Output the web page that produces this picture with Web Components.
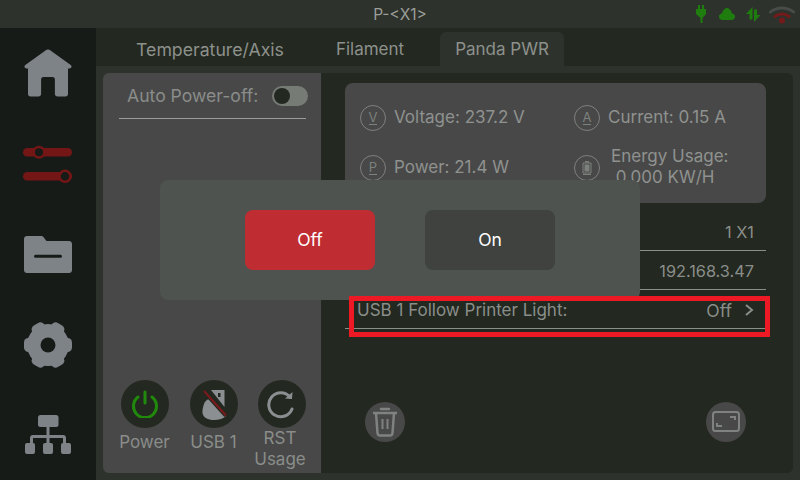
<!DOCTYPE html>
<html>
<head>
<meta charset="utf-8">
<title>Panda PWR</title>
<style>
html, body { margin: 0; padding: 0; width: 800px; height: 480px; overflow: hidden; background: #2d332c; }
body { font-family: "Inter", "Noto Sans", sans-serif; }
</style>
</head>
<body>
<panda-app></panda-app>
<script>
// small helper so every element below stays a few lines long
function define(name, css, html) {
    customElements.define(name, class extends HTMLElement {
        constructor() {
            super();
            this.attachShadow({ mode: 'open' });
        }
        connectedCallback() {
            const attrs = {};
            for (const a of this.attributes) attrs[a.name] = a.value;
            this.shadowRoot.innerHTML = `<style>${css}</style>${typeof html === 'function' ? html(attrs) : html}`;
        }
    });
}

// ── Top bar ───────────────────────────────────────────────────────────────────
define('top-bar', `
    :host { display: flex; height: 28px; position: relative; align-items: center; justify-content: center;
        background: #2d322c; color: #9b9e99; font-size: 15.5px; }
    .status { position: absolute; right: 5px; top: 3px; display: flex; }
    svg { display: block; }
`, `
    <span>P-&lt;X1&gt;</span>
    <div class="status">
        <svg width="108" height="24" viewBox="0 0 108 24">
            <path d="M11 2h2v4h2V2h2v4h2v5l-3.500 4v5h-2v-5L9 11V6h2z" fill="#1f7c0f"/>
            <path d="M35.500 17c-2.200 0-3.500-1.500-3.500-3.200 0-1.700 1.200-3 3-3.200.6-3 2.800-5.600 5-5.600s4.400 2.600 5 5.600c1.800.2 3 1.500 3 3.200 0 1.700-1.300 3.200-3.500 3.200z" fill="#1f7c0f"/>
            <path d="M65.500 4v12.500h-3V11H59zM67 19V6.500h3V12h3.500z" fill="#1f7c0f"/>
            <path d="M83.500 9c6-5.500 17-5.500 23 0" fill="none" stroke="#484b47" stroke-width="3" stroke-linecap="round"/>
            <path d="M88 13.500c4-3.500 10-3.500 14 0" fill="none" stroke="#741a1a" stroke-width="3" stroke-linecap="round"/>
            <circle cx="95" cy="17.500" r="3" fill="#741a1a"/>
        </svg>
    </div>
`);

// ── Side navigation ───────────────────────────────────────────────────────────
define('side-nav', `
    :host { display: flex; flex-direction: column; width: 96px; box-sizing: border-box; height: 452px;
        background: #171b18; align-items: center; }
    .slot { width: 96px; display: flex; align-items: center; justify-content: center; }
    svg { display: block; overflow: visible; }
`, `
    <div class="slot" style="height:92px">
        <svg width="50" height="50" viewBox="0 0 50 50"><path fill="#7e8388" d="M25 .5c1 0 1.700.4 2.500 1L47.700 16c1.500 1.200 1 3.300-1.200 3.500h-1.500V45c0 1.600-1 2.500-2.500 2.500h-8c-1.500 0-2.600-1-2.600-2.500V30.500c0-1.500-.9-2.500-2.400-2.500h-9c-1.500 0-2.400 1-2.400 2.500V45c0 1.500-1.100 2.500-2.600 2.500H7.500C6 47.500 5 46.600 5 45V19.500H3.500c-2.200-.2-2.700-2.300-1.200-3.500L22.500 1.500c.8-.6 1.500-1 2.500-1z"/></svg>
    </div>
    <div class="slot" style="height:92px">
        <svg width="50" height="36" viewBox="0 0 50 36">
            <rect x="0" y="0" width="49" height="8.500" rx="4.250" fill="#751616"/>
            <rect x="0" y="24" width="49" height="8.500" rx="4.250" fill="#751616"/>
            <circle cx="16" cy="4.200" r="5.300" fill="#171b18" stroke="#751616" stroke-width="2.500"/>
            <circle cx="42" cy="28.200" r="5.500" fill="#171b18" stroke="#751616" stroke-width="2.500"/>
        </svg>
    </div>
    <div class="slot" style="height:85px">
        <svg width="50" height="37" viewBox="0 0 50 37"><path fill="#7e8388" fill-rule="evenodd" d="M1 3C1 1.200 2.300 0 4 0h14c1.500 0 2.300.7 3 1.700L23.500 5H46c1.700 0 3 1.300 3 3v26c0 1.700-1.300 3-3 3H4c-1.700 0-3-1.300-3-3z M12.500 18.800a1.500 1.500 0 0 0 0 3h25a1.500 1.500 0 0 0 0-3z"/></svg>
    </div>
    <div class="slot" style="height:95px">
        <svg width="48" height="48" viewBox="-24 -24 48 48">
            <mask id="hole"><rect x="-30" y="-30" width="60" height="60" fill="#fff"/><circle r="7.500" fill="#000"/></mask>
            <g fill="#7e8388" mask="url(#hole)">
                <circle r="21"/>
                <rect x="-24" y="-7" width="48" height="14" rx="4.500"/>
                <rect x="-24" y="-7" width="48" height="14" rx="4.500" transform="rotate(60)"/>
                <rect x="-24" y="-7" width="48" height="14" rx="4.500" transform="rotate(120)"/>
            </g>
        </svg>
    </div>
    <div class="slot" style="height:84px">
        <svg width="48" height="39" viewBox="0 0 48 39"><g fill="#7e8388">
            <rect x="14" y="0" width="20.500" height="12" rx="2.500"/>
            <rect x="22.500" y="11" width="3" height="18"/>
            <path d="M6 29v-6c0-2 1-3 3-3h30c2 0 3 1 3 3v6h-3v-6H9v6z"/>
            <rect x="1" y="28" width="10" height="11" rx="2"/>
            <rect x="19" y="28" width="10" height="11" rx="2"/>
            <rect x="37" y="28" width="10" height="11" rx="2"/>
        </g></svg>
    </div>
`);

// ── Tabs ──────────────────────────────────────────────────────────────────────
define('tab-bar', `
    :host { display: flex; height: 38px; box-sizing: border-box; padding: 4px 0 0 24px; background: #232820;
        color: #8d918c; font-size: 17px; }
    span { display: flex; align-items: center; justify-content: center; height: 34px; box-sizing: border-box; border-radius: 6px 6px 0 0; }
    .a { width: 180px; font-size: 17.7px; }
    .b { width: 140px; }
    .c { width: 124px; background: #2d332c; }
`, `
    <span class="a">Temperature/Axis</span>
    <span class="b">Filament</span>
    <span class="c">Panda PWR</span>
`);

// ── Round button with a label (left panel) ────────────────────────────────────
define('round-action', `
    :host { display: flex; flex: none; flex-direction: column; align-items: center; width: 68px; color: #8a8d8a; font-size: 17px; line-height: 21px; text-align: center; }
    .disc { width: 48px; height: 48px; border-radius: 50%; background: #232820; display: flex; align-items: center; justify-content: center; flex: none; }
    svg { display: block; }
`, a => `
    <div class="disc"><slot></slot></div>
    <div style="margin-top:${a.gap}px;padding-right:${a.nudge || 0}px">${a.label}</div>
`);

// ── Left panel ────────────────────────────────────────────────────────────────
define('power-panel', `
    :host { display: flex; flex-direction: column; width: 218px; height: 400px; box-sizing: border-box; background: #484848;
        border-radius: 6px 0 0 6px; color: #8a8d8a; padding: 0 15px 0 16px; }
    .auto { display: flex; align-items: center; height: 45px; border-bottom: 1px solid #9a9c9a; font-size: 17.6px; padding-left: 8px; gap: 14px; white-space: nowrap; }
    .toggle { width: 36px; height: 20px; border-radius: 10px; background: #767b76; position: relative; flex: none; }
    .toggle i { position: absolute; left: 2px; top: 2px; width: 16px; height: 16px; border-radius: 50%; background: #232820; }
    .actions { margin-top: auto; display: flex; margin-left: -8px; height: 93px; gap: 0.500px; }
`, `
    <div class="auto"><span>Auto Power-off:</span><div class="toggle"><i></i></div></div>
    <div class="actions">
        <round-action label="Power" gap="4" nudge="1">
            <svg width="28" height="28" viewBox="0 0 28 28" fill="none" stroke="#218a0d" stroke-width="3" stroke-linecap="round"><path d="M14 2v11"/><path d="M7 7a11.500 11.500 0 1 0 14 0" /></svg>
        </round-action>
        <round-action label="USB 1" gap="4">
            <svg width="48" height="48" viewBox="0 0 48 48">
                <path fill="#8b8f92" d="M21 10h13.500v17z"/>
                <rect x="28" y="13" width="2.500" height="4" fill="#232820"/>
                <path fill="#8b8f92" d="M19 19l17 17c-2.500 2.500-7 4-12 4-6 0-11-2.500-11.500-7-.3-3 .5-6 1.500-9 .8-2.500 2.500-4 5-5z"/>
                <path d="M13 10l23 25.500" stroke="#232820" stroke-width="4.500"/>
                <path d="M14 11l22 24.500" stroke="#7a1b1b" stroke-width="2.200"/>
            </svg>
        </round-action>
        <round-action label="RST<br>Usage" gap="0" nudge="4">
            <svg width="30" height="30" viewBox="0 0 30 30" fill="none" stroke="#8b8f92" stroke-width="3" stroke-linecap="round"><path d="M25 20a12 12 0 1 1-2-12"/><path d="M25.500 3l-.5 7-7-.5" fill="#8b8f92" stroke-width="0"/></svg>
        </round-action>
    </div>
`);

// ── Metric with a round letter icon ───────────────────────────────────────────
define('metric-item', `
    :host { display: flex; align-items: center; gap: 8px; color: #8f928f; font-size: 17px; line-height: 21px; white-space: pre; }
    .ico { width: 26px; height: 26px; flex: none; box-sizing: border-box; border: 1.500px solid #7d817d; border-radius: 50%;
        display: flex; flex-direction: column; align-items: center; justify-content: center; font-size: 13px; line-height: 13px; color: #7d817d; }
    .ico::after { content: ""; width: 8px; height: 1px; background: #7d817d; }
    .txt { padding-bottom: 2px; }
`, a => `
    <div class="ico"><slot></slot></div>
    <div class="txt" style="margin-left:${a.shift || 0}px">${a.text}</div>
`);

// ── Setting row ───────────────────────────────────────────────────────────────
define('setting-row', `
    :host { display: flex; align-items: center; height: 39px; box-sizing: border-box; padding: 2px 12px 0 12px; border-bottom: 1px solid #8a8f87;
        color: #8a8e8a; font-size: 17px; justify-content: space-between; }
    .v { display: flex; align-items: center; gap: 13px; font-size: 16.3px; }
`, `
    <span><slot name="k"></slot></span><span class="v"><slot></slot></span>
`);

// ── Right panel ───────────────────────────────────────────────────────────────
define('detail-panel', `
    :host { display: block; width: 472px; height: 400px; box-sizing: border-box; background: #232820; border-radius: 0 6px 6px 0;
        padding: 10px 27px 0 24px; }
    .card { height: 120px; box-sizing: border-box; background: #484848; border-radius: 8px; display: grid;
        grid-template-columns: 214px 1fr; grid-template-rows: 50px 50px; align-content: center; padding: 0 0 0 15px; margin-bottom: 9px; }
    .foot { display: flex; justify-content: space-between; padding: 73px 20px 0 20px; }
    .btn { width: 40px; height: 40px; border-radius: 50%; background: #484848; display: flex; align-items: center; justify-content: center; }
    svg { display: block; }
    .chev { width: 9px; height: 12px; }
    .off { font-size: 17.5px; }
`, `
    <div class="card">
        <metric-item text="Voltage: 237.2 V">V</metric-item>
        <metric-item text="Current: 0.15 A">A</metric-item>
        <metric-item text="Power: 21.4 W">P</metric-item>
        <metric-item shift="3" text="Energy Usage:&#10; 0.000 KW/H">
            <svg width="10" height="13" viewBox="0 0 10 13"><path fill="none" stroke="#7d817d" stroke-width="1" d="M1 2h8v10H1z"/><rect x="2.500" y="3.500" width="5" height="7" fill="#7d817d"/><rect x="3" y="0" width="4" height="1.500" fill="#7d817d"/></svg>
        </metric-item>
    </div>
    <setting-row><span slot="k"></span>1 X1</setting-row>
    <setting-row><span slot="k"></span>192.168.3.47</setting-row>
    <setting-row><span slot="k">USB 1 Follow Printer Light:</span><span class="off">Off</span><svg class="chev" viewBox="0 0 9 12" fill="none" stroke="#8a8e8a" stroke-width="2"><path d="M1 1l6 5-6 5"/></svg></setting-row>
    <div class="foot">
        <div class="btn"><svg width="26" height="30" viewBox="0 0 26 30" fill="none" stroke="#7f8280" stroke-width="2.500"><path d="M1 6h24" /><path d="M9 2h8" stroke-linecap="round"/><path d="M4 6l1.500 20c.1 1.500 1 2.500 2.500 2.500h10c1.500 0 2.400-1 2.500-2.500L22 6"/><path d="M10.500 12v10M15.500 12v10" stroke-width="2"/></svg></div>
        <div class="btn"><svg width="28" height="22" viewBox="0 0 28 22" fill="none" stroke="#7f8280" stroke-width="2"><rect x="1" y="1" width="26" height="19" rx="2.500"/><path d="M18 6h5v3M5 12v3h5"/></svg></div>
    </div>
`);

// ── Confirm dialog ────────────────────────────────────────────────────────────
define('confirm-dialog', `
    :host { position: absolute; left: 160px; top: 180px; width: 480px; height: 120px; background: #4f534f; border-radius: 8px;
        display: flex; justify-content: center; align-items: center; gap: 50px; color: #fff; font-size: 17.5px; }
    div { width: 130px; height: 60px; box-sizing: border-box; padding-bottom: 1px; border-radius: 8px; display: flex; align-items: center; justify-content: center; background: #3f423f; }
    .off { background: #bf2d32; }
`, `
    <div class="off">Off</div>
    <div>On</div>
`);

// ── Red highlight drawn over the row ──────────────────────────────────────────
define('row-highlight', `
    :host { position: absolute; left: 349px; top: 296px; width: 421px; height: 41px; box-sizing: border-box; border: 5px solid #ed1a25; pointer-events: none; }
`, ``);

// ── Whole page ────────────────────────────────────────────────────────────────
define('panda-app', `
    :host { display: block; width: 800px; height: 480px; position: relative; background: #2d332c; }
    .body { display: flex; }
    .main { flex: 1; }
    .panels { display: flex; padding: 7px 7px 0 7px; }
`, `
    <top-bar></top-bar>
    <div class="body">
        <side-nav></side-nav>
        <div class="main">
            <tab-bar></tab-bar>
            <div class="panels">
                <power-panel></power-panel>
                <detail-panel></detail-panel>
            </div>
        </div>
    </div>
    <confirm-dialog></confirm-dialog>
    <row-highlight></row-highlight>
`);
</script>
</body>
</html>
